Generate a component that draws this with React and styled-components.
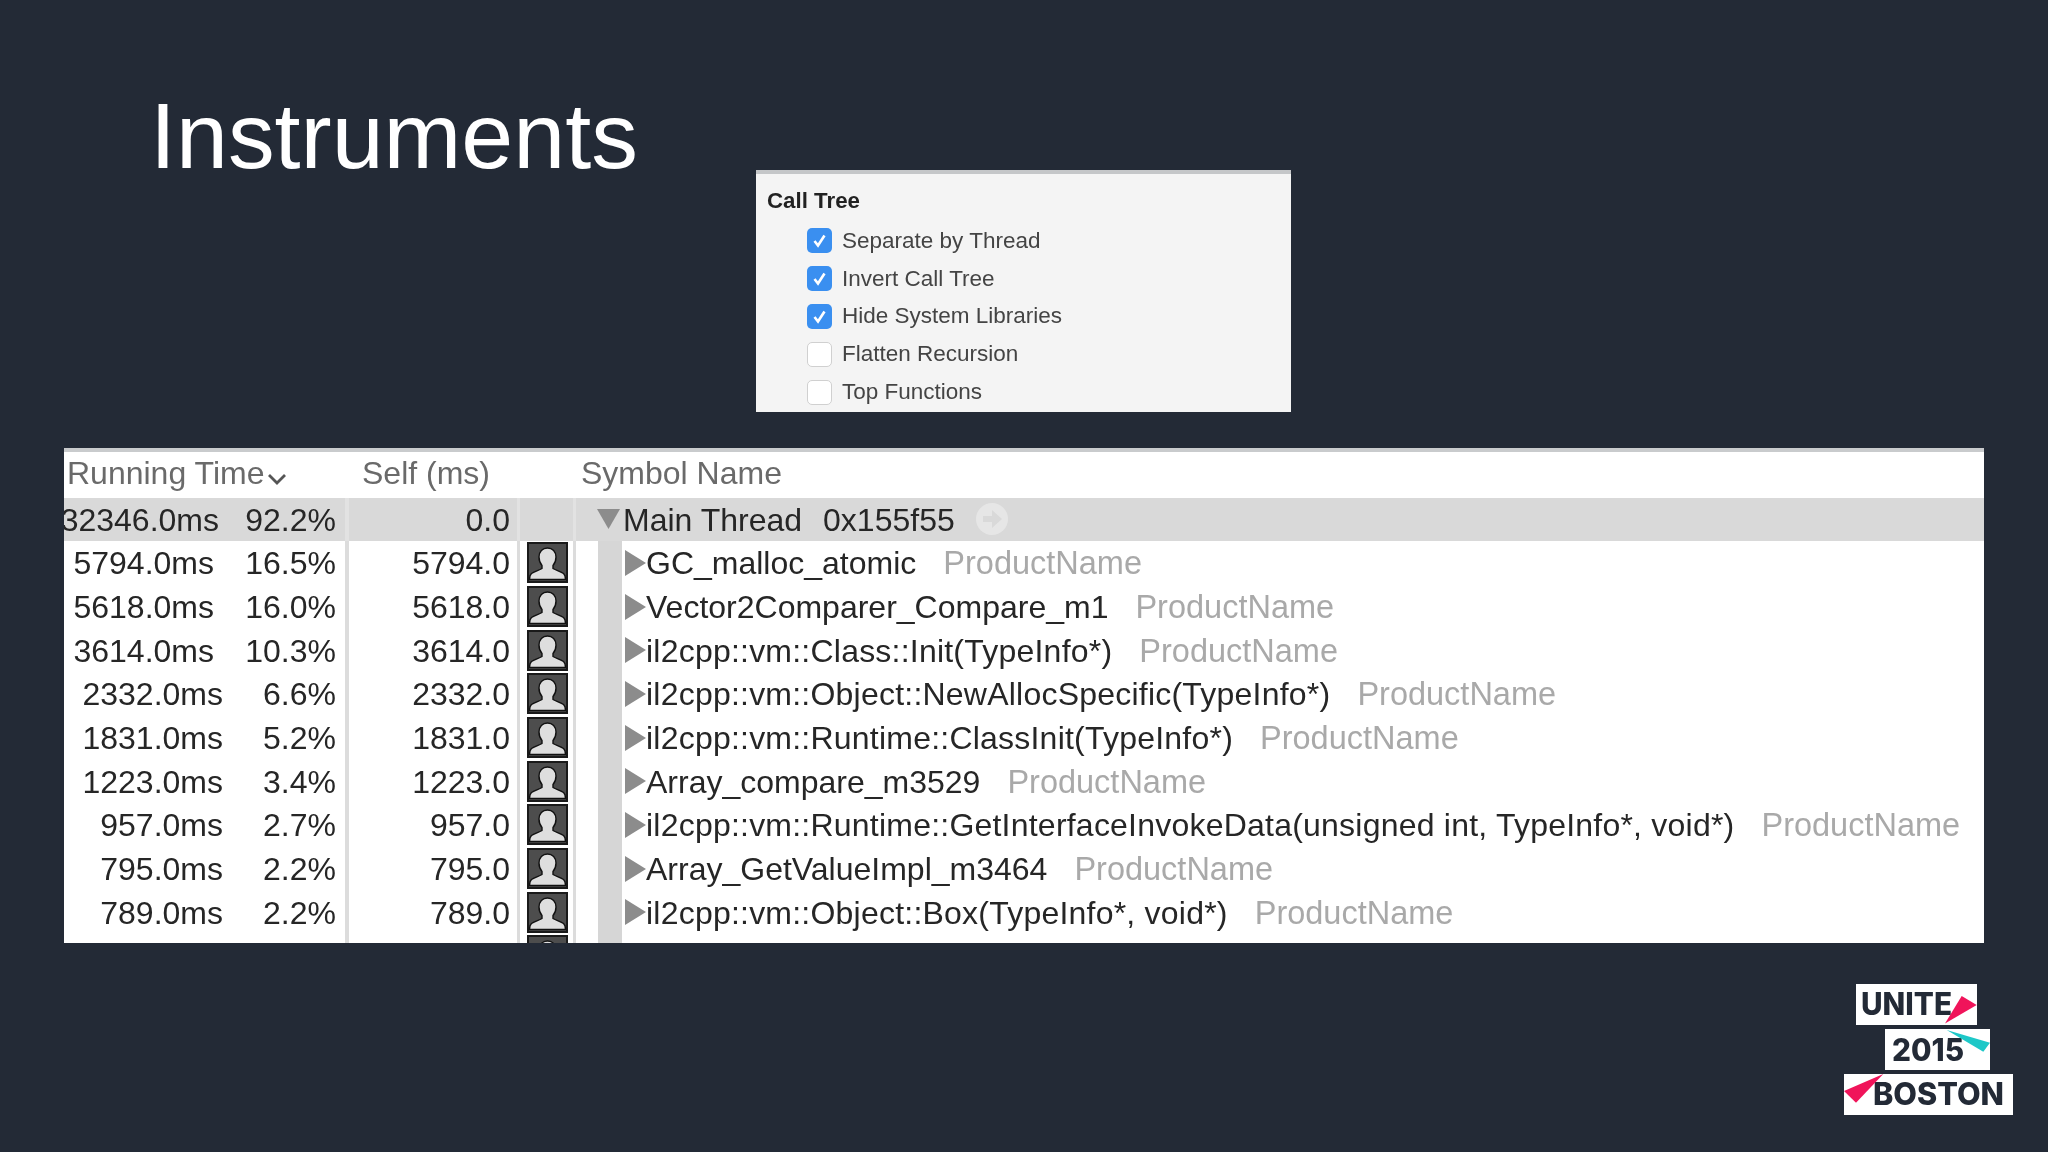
import React from "react";
import styled, { createGlobalStyle } from "styled-components";

const Global = createGlobalStyle`
  html, body { margin: 0; padding: 0; background: #232a36; }
  body { font-family: "Liberation Sans", Arial, sans-serif; }
`;

const Slide = styled.div`
  width: 2048px;
  height: 1152px;
  background: #232a36;
  overflow: hidden;
`;

const Top = styled.header`
  display: grid;
  grid-template-columns: 756px 535px;
  height: 448px;
`;

const Title = styled.h1`
  margin: 0;
  padding: 84px 0 0 150px;
  font-size: 93.4px;
  line-height: 104px;
  font-weight: 400;
  color: #fff;
  filter: blur(0.4px);
`;

const Panel = styled.section`
  margin-top: 170px;
  height: 242px;
  box-sizing: border-box;
  background: #f4f4f4;
  border-top: 4px solid #c4c6c8;
  padding: 13px 0 0 11px;
  overflow: hidden;
  filter: blur(0.6px);
`;

const PanelHead = styled.div`
  font-size: 22.3px;
  line-height: 28px;
  font-weight: 700;
  color: #222;
  margin-bottom: 7px;
`;

const Option = styled.label`
  display: flex;
  align-items: center;
  height: 37.8px;
  padding-left: 40px;
  font-size: 22.5px;
  color: #444;
`;

const Box = styled.span`
  display: flex;
  align-items: center;
  justify-content: center;
  width: 25px;
  height: 25px;
  margin-right: 10px;
  box-sizing: border-box;
  border-radius: 5px;
  background: ${(p) => (p.$on ? "#3a8ff0" : "#fff")};
  border: ${(p) => (p.$on ? "none" : "1.5px solid #d0d0d0")};
`;

const Table = styled.section`
  width: 1920px;
  height: 495px;
  margin-left: 64px;
  background: #fff;
  overflow: hidden;
  filter: blur(0.6px);
`;

const HeadRow = styled.div`
  display: flex;
  align-items: center;
  height: 49.5px;
  box-sizing: border-box;
  border-top: 4px solid #c9cbcd;
  padding-bottom: 2px;
  font-size: 32px;
  color: #6a6a6a;
`;

const HeadCell = styled.div`
  display: flex;
  align-items: center;
  flex: none;
  width: ${(p) => p.$w}px;
  padding-left: ${(p) => p.$pad}px;
  box-sizing: border-box;
  white-space: nowrap;
`;

const Row = styled.div`
  display: flex;
  align-items: stretch;
  width: 1920px;
  height: 43.67px;
  font-size: 32px;
  color: #262626;
  background: ${(p) => (p.$main ? "#d9d9d9" : "#fff")};
`;

const TimeCell = styled.div`
  display: flex;
  align-items: center;
  justify-content: flex-end;
  flex: none;
  box-sizing: border-box;
  width: 159px;
  padding-top: 2px;
  padding-right: ${(p) => p.$inset}px;
  white-space: nowrap;
`;

const PctCell = styled.div`
  display: flex;
  align-items: center;
  justify-content: flex-end;
  width: 113px;
  flex: none;
  box-sizing: border-box;
  padding-top: 2px;
`;

const Sep = styled.div`
  width: 13px;
  flex: none;
  box-sizing: border-box;
  border-right: 4px solid ${(p) => (p.$main ? "#e2e2e2" : "#dcdcdc")};
`;

const SelfCell = styled.div`
  display: flex;
  align-items: center;
  justify-content: flex-end;
  width: 171px;
  flex: none;
  box-sizing: border-box;
  padding: 2px 7px 0 0;
  border-right: 3px solid ${(p) => (p.$main ? "#e2e2e2" : "#dcdcdc")};
`;

const IconCell = styled.div`
  display: flex;
  align-items: center;
  justify-content: center;
  width: 56px;
  flex: none;
  box-sizing: border-box;
  padding-left: 2px;
  border-right: 3px solid ${(p) => (p.$main ? "#e2e2e2" : "#dcdcdc")};
`;

const SymbolCell = styled.div`
  display: flex;
  align-items: center;
  white-space: nowrap;
  flex: 1;
  min-width: 0;
  padding-left: ${(p) => (p.$main ? 21 : 22)}px;
`;

const Guide = styled.div`
  align-self: stretch;
  width: 24px;
  flex: none;
  margin-right: 3px;
  background: #d6d6d6;
`;

const Twisty = styled.svg`
  flex: none;
  display: block;
  margin-right: ${(p) => p.$gap}px;
`;

const Name = styled.span`
  padding-top: 2px;
  color: #262626;
  letter-spacing: ${(p) => (p.$native ? "0.22px" : "0")};
`;

const Lib = styled.span`
  padding-top: 2px;
  color: #a9a9a9;
  font-size: 32.5px;
  margin-left: 27px;
`;

const Addr = styled.span`
  padding-top: 2px;
  margin-left: 21px;
`;

const Go = styled.svg`
  flex: none;
  margin-left: 20px;
`;

const Chev = styled.svg`
  flex: none;
  margin-top: 10px;
  margin-left: 3px;
`;

const Footer = styled.footer`
  display: flex;
  justify-content: flex-end;
  margin-top: 41px;
  padding-right: 35px;
`;

const LogoSvg = styled.svg`
  display: block;
  filter: blur(0.5px);
`;

const LogoWord = styled.text`
  font-family: Inter, "Liberation Sans", sans-serif;
  font-weight: 800;
  font-size: 31px;
  fill: #232a36;
`;

const Person = () => (
  <svg width="41" height="41" viewBox="0 0 41 41">
    <rect x="1" y="1" width="39" height="39" fill="#4d4d4d" stroke="#1a1a1a" strokeWidth="2" />
    <path
      d="M20.500 6c-5 0-8.500 3.500-8.500 9 0 3.500 1.200 6.500 3 8.500v3c-3 2-8 3-10.500 5-1.500 1.300-2 3-2 6h36c0-3-.5-4.700-2-6-2.500-2-7.500-3-10.500-5v-3c1.800-2 3-5 3-8.500 0-5.500-3.500-9-8.500-9z"
      fill="#dedede"
      stroke="#111"
      strokeWidth="1.400"
    />
  </svg>
);

const Check = () => (
  <svg width="17" height="17" viewBox="0 0 17 17">
    <path d="M3.500 9l3.500 4.500L13.500 3.500" fill="none" stroke="#fff" strokeWidth="2.600" />
  </svg>
);

const Chevron = () => (
  <Chev width="20" height="12" viewBox="0 0 20 12">
    <path d="M2 2l8 8 8-8" fill="none" stroke="#555" strokeWidth="2.800" />
  </Chev>
);

const ArrowClosed = () => (
  <Twisty width="21" height="26" viewBox="0 0 21 26" $gap={0}>
    <path d="M0 0L21 13 0 26z" fill="#8c8c8c" />
  </Twisty>
);

const ArrowOpen = () => (
  <Twisty width="23" height="20" viewBox="0 0 23 20" $gap={3}>
    <path d="M0 0H23L11.500 20z" fill="#8c8c8c" />
  </Twisty>
);

const GoCircle = () => (
  <Go width="34" height="34" viewBox="0 0 34 34">
    <circle cx="17" cy="17" r="16" fill="#e6e6e6" />
    <path d="M8 14h9V8l10 9-10 9v-6H8z" fill="#d9d9d9" />
  </Go>
);

const Logo = () => (
  <LogoSvg width="169" height="131" viewBox="0 0 169 131">
    <rect x="12" y="0" width="121" height="41" fill="#fff" />
    <rect x="41" y="45" width="105" height="41" fill="#fff" />
    <rect x="0" y="90" width="169" height="41" fill="#fff" />
    <LogoWord x="17" y="31" textLength="91" lengthAdjust="spacingAndGlyphs">UNITE</LogoWord>
    <LogoWord x="48" y="77" textLength="72" lengthAdjust="spacingAndGlyphs">2015</LogoWord>
    <LogoWord x="29" y="121" textLength="131" lengthAdjust="spacingAndGlyphs">BOSTON</LogoWord>
    <path d="M101 39.500L117.700 12 132.700 21z" fill="#f0145a" />
    <path d="M102.700 46L146 58.700 139.300 67.700z" fill="#1ec8c8" />
    <path d="M39.300 90L0 107 12 118.700z" fill="#f0145a" />
  </LogoSvg>
);

const options = [
  ["Separate by Thread", true],
  ["Invert Call Tree", true],
  ["Hide System Libraries", true],
  ["Flatten Recursion", false],
  ["Top Functions", false],
];

const rows = [
  ["5794.0ms", "16.5%", "5794.0", "GC_malloc_atomic"],
  ["5618.0ms", "16.0%", "5618.0", "Vector2Comparer_Compare_m1"],
  ["3614.0ms", "10.3%", "3614.0", "il2cpp::vm::Class::Init(TypeInfo*)"],
  ["2332.0ms", "6.6%", "2332.0", "il2cpp::vm::Object::NewAllocSpecific(TypeInfo*)"],
  ["1831.0ms", "5.2%", "1831.0", "il2cpp::vm::Runtime::ClassInit(TypeInfo*)"],
  ["1223.0ms", "3.4%", "1223.0", "Array_compare_m3529"],
  ["957.0ms", "2.7%", "957.0", "il2cpp::vm::Runtime::GetInterfaceInvokeData(unsigned int, TypeInfo*, void*)"],
  ["795.0ms", "2.2%", "795.0", "Array_GetValueImpl_m3464"],
  ["789.0ms", "2.2%", "789.0", "il2cpp::vm::Object::Box(TypeInfo*, void*)"],
];

export default function App() {
  return (
    <Slide>
      <Global />
      <Top>
        <Title>Instruments</Title>
        <Panel>
          <PanelHead>Call Tree</PanelHead>
          {options.map(([label, on]) => (
            <Option key={label}>
              <Box $on={on}>{on && <Check />}</Box>
              {label}
            </Option>
          ))}
        </Panel>
      </Top>
      <Table>
        <HeadRow>
          <HeadCell $w={298} $pad={3}>Running Time<Chevron /></HeadCell>
          <HeadCell $w={219} $pad={0}>Self (ms)</HeadCell>
          <HeadCell $w={1000} $pad={0}>Symbol Name</HeadCell>
        </HeadRow>
        <Row $main>
          <TimeCell $inset={4}>32346.0ms</TimeCell>
          <PctCell>92.2%</PctCell>
          <Sep $main />
          <SelfCell $main>0.0</SelfCell>
          <IconCell $main />
          <SymbolCell $main>
            <ArrowOpen />
            <Name>Main Thread</Name>
            <Addr>0x155f55</Addr>
            <GoCircle />
          </SymbolCell>
        </Row>
        {rows.map(([time, pct, self, name]) => (
          <Row key={name}>
            <TimeCell $inset={pct.length > 4 ? 9 : 0}>{time}</TimeCell>
            <PctCell>{pct}</PctCell>
            <Sep />
            <SelfCell>{self}</SelfCell>
            <IconCell><Person /></IconCell>
            <SymbolCell>
              <Guide />
              <ArrowClosed />
              <Name $native={name.startsWith("il2cpp")}>{name}</Name>
              <Lib>ProductName</Lib>
            </SymbolCell>
          </Row>
        ))}
        <Row>
          <TimeCell $inset={0} />
          <PctCell />
          <Sep />
          <SelfCell />
          <IconCell><Person /></IconCell>
          <SymbolCell><Guide /></SymbolCell>
        </Row>
      </Table>
      <Footer>
        <Logo />
      </Footer>
    </Slide>
  );
}
